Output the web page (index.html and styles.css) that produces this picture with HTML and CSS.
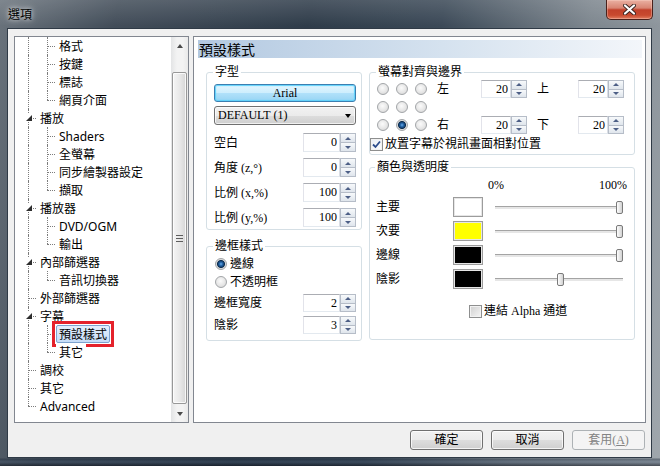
FILE: index.html
```html
<!DOCTYPE html>
<html lang="zh-Hant">
<head>
<meta charset="utf-8">
<title>選項</title>
<link rel="stylesheet" href="styles.css">
</head>
<body>
<div class="window">
  <div class="titlebar">
    <span class="title">選項</span>
    <div class="close">
      <svg width="13" height="11" viewBox="0 0 13 11"><path d="M2 1.5 L11 9.5 M11 1.5 L2 9.5" stroke="#3a2420" stroke-width="4" stroke-linecap="round"/><path d="M2 1.5 L11 9.5 M11 1.5 L2 9.5" stroke="#fff" stroke-width="2.2" stroke-linecap="round"/></svg>
    </div>
  </div>
  <div class="client">
    <div class="main">
      <div class="tree">
        <ul class="nodes">
          <li class="row"><span class="c v"></span><span class="c t"></span><span class="lbl">格式</span></li>
          <li class="row"><span class="c v"></span><span class="c t"></span><span class="lbl">按鍵</span></li>
          <li class="row"><span class="c v"></span><span class="c t"></span><span class="lbl">標誌</span></li>
          <li class="row"><span class="c v"></span><span class="c l"></span><span class="lbl">網頁介面</span></li>
          <li class="row"><span class="c x"><i class="tri"></i></span><span class="lbl">播放</span></li>
          <li class="row"><span class="c v"></span><span class="c t"></span><span class="lbl">Shaders</span></li>
          <li class="row"><span class="c v"></span><span class="c t"></span><span class="lbl">全螢幕</span></li>
          <li class="row"><span class="c v"></span><span class="c t"></span><span class="lbl">同步繪製器設定</span></li>
          <li class="row"><span class="c v"></span><span class="c l"></span><span class="lbl">擷取</span></li>
          <li class="row"><span class="c x"><i class="tri"></i></span><span class="lbl">播放器</span></li>
          <li class="row"><span class="c v"></span><span class="c t"></span><span class="lbl">DVD/OGM</span></li>
          <li class="row"><span class="c v"></span><span class="c l"></span><span class="lbl">輸出</span></li>
          <li class="row"><span class="c x"><i class="tri"></i></span><span class="lbl">內部篩選器</span></li>
          <li class="row"><span class="c v"></span><span class="c l"></span><span class="lbl">音訊切換器</span></li>
          <li class="row"><span class="c t"></span><span class="lbl">外部篩選器</span></li>
          <li class="row"><span class="c x"><i class="tri"></i></span><span class="lbl">字幕</span></li>
          <li class="row"><span class="c v"></span><span class="c t"></span><span class="lbl selected">預設樣式</span></li>
          <li class="row"><span class="c v"></span><span class="c l"></span><span class="lbl">其它</span></li>
          <li class="row"><span class="c t"></span><span class="lbl">調校</span></li>
          <li class="row"><span class="c t"></span><span class="lbl">其它</span></li>
          <li class="row"><span class="c l"></span><span class="lbl">Advanced</span></li>
        </ul>
        <div class="vscroll">
          <div class="sarrow"><i class="up"></i></div>
          <div class="strack"><div class="thumb"><i class="grip"></i></div></div>
          <div class="sarrow"><i class="down"></i></div>
        </div>
      </div>

      <div class="page">
        <div class="page-title">預設樣式</div>
        <div class="page-body">
          <div class="col col-left">
            <fieldset class="grp g-font">
              <legend>字型</legend>
              <div class="stack">
                <button class="hot">Arial</button>
                <div class="combo"><span>DEFAULT (1)</span><i class="carrow"></i></div>
                <div class="frow"><span>空白</span><div class="spin"><span class="edit">0</span><span class="sbs"><span class="sb up"></span><span class="sb dn"></span></span></div></div>
                <div class="frow"><span>角度 (z,°)</span><div class="spin"><span class="edit">0</span><span class="sbs"><span class="sb up"></span><span class="sb dn"></span></span></div></div>
                <div class="frow"><span>比例 (x,%)</span><div class="spin"><span class="edit">100</span><span class="sbs"><span class="sb up"></span><span class="sb dn"></span></span></div></div>
                <div class="frow"><span>比例 (y,%)</span><div class="spin"><span class="edit">100</span><span class="sbs"><span class="sb up"></span><span class="sb dn"></span></span></div></div>
              </div>
            </fieldset>
            <fieldset class="grp g-border">
              <legend>邊框樣式</legend>
              <div class="stack">
                <div class="rrow"><i class="radio on"></i><span>邊線</span></div>
                <div class="rrow"><i class="radio"></i><span>不透明框</span></div>
                <div class="frow frow-s first"><span>邊框寬度</span><div class="spin spin-s"><span class="edit">2</span><span class="sbs"><span class="sb up"></span><span class="sb dn"></span></span></div></div>
                <div class="frow frow-s"><span>陰影</span><div class="spin spin-s"><span class="edit">3</span><span class="sbs"><span class="sb up"></span><span class="sb dn"></span></span></div></div>
              </div>
            </fieldset>
          </div>

          <div class="col col-right">
            <fieldset class="grp g-align">
              <legend>螢幕對齊與邊界</legend>
              <div class="stack">
                <div class="arow">
                  <div class="rgrid">
                    <span class="rc"><i class="radio"></i></span><span class="rc"><i class="radio"></i></span><span class="rc"><i class="radio"></i></span>
                    <span class="rc"><i class="radio"></i></span><span class="rc"><i class="radio"></i></span><span class="rc"><i class="radio"></i></span>
                    <span class="rc"><i class="radio"></i></span><span class="rc"><i class="radio on"></i></span><span class="rc"><i class="radio"></i></span>
                  </div>
                  <div class="mgrid">
                    <span class="ml">左</span>
                    <div class="spin spin-n"><span class="edit">20</span><span class="sbs"><span class="sb up"></span><span class="sb dn"></span></span></div>
                    <span class="ml ml2">上</span>
                    <div class="spin spin-n"><span class="edit">20</span><span class="sbs"><span class="sb up"></span><span class="sb dn"></span></span></div>
                    <span class="ml r3">右</span>
                    <div class="spin spin-n r3"><span class="edit">20</span><span class="sbs"><span class="sb up"></span><span class="sb dn"></span></span></div>
                    <span class="ml ml2 r3">下</span>
                    <div class="spin spin-n r3"><span class="edit">20</span><span class="sbs"><span class="sb up"></span><span class="sb dn"></span></span></div>
                  </div>
                </div>
                <div class="crow-check"><i class="check on"><svg width="11" height="11" viewBox="0 0 11 11"><path d="M2 5.5 L4.5 8 L9 2.5" fill="none" stroke="#2b4c8c" stroke-width="1.8"/></svg></i><span>放置字幕於視訊畫面相對位置</span></div>
              </div>
            </fieldset>
            <fieldset class="grp g-color">
              <legend>顏色與透明度</legend>
              <div class="stack">
                <div class="crow head"><span></span><span></span><span class="pct"><span>0%</span><span>100%</span></span></div>
                <div class="crow"><span>主要</span><span class="sw sw-white"></span><div class="slider"><span class="track"></span><span class="sthumb" style="--v:1"></span></div></div>
                <div class="crow"><span>次要</span><span class="sw sw-yellow"></span><div class="slider"><span class="track"></span><span class="sthumb" style="--v:1"></span></div></div>
                <div class="crow"><span>邊線</span><span class="sw sw-black"></span><div class="slider"><span class="track"></span><span class="sthumb" style="--v:1"></span></div></div>
                <div class="crow"><span>陰影</span><span class="sw sw-black"></span><div class="slider"><span class="track"></span><span class="sthumb" style="--v:0.51"></span></div></div>
                <div class="alpha"><i class="check"></i><span>連結 Alpha 通道</span></div>
              </div>
            </fieldset>
          </div>
        </div>
      </div>
    </div>
    <div class="buttons">
      <button class="btn">確定</button>
      <button class="btn">取消</button>
      <button class="btn disabled">套用(<u>A</u>)</button>
    </div>
  </div>
</div>
</body>
</html>
```
FILE: styles.css
```css
* { box-sizing: border-box; }
html, body { margin: 0; padding: 0; }
body {
  width: 660px;
  height: 466px;
  overflow: hidden;
  font: 12px/14px "Liberation Serif", "Noto Sans CJK TC", serif;
  color: #000;
}

/* window frame */
.window {
  width: 660px;
  height: 466px;
  display: flex;
  flex-direction: column;
  background:
    linear-gradient(to bottom, rgba(255,255,255,0.14), rgba(255,255,255,0) 26px),
    linear-gradient(to bottom, rgba(0,0,0,0) 458px, rgba(25,38,55,0.45) 459px, rgba(60,80,105,0.35) 462px, rgba(10,15,25,0.6) 466px),
    linear-gradient(100deg, #6a737c 0%, #424d59 16%, #2f3c4a 42%, #3b4957 60%, #7d868e 80%, #a0a7ad 100%);
}
.titlebar {
  height: 28px;
  flex: none;
  display: flex;
  align-items: flex-start;
  padding: 0 7px 0 8px;
}
.title {
  margin-top: 7px;
  font: 12px/14px "Noto Sans CJK TC", sans-serif;
  color: #000;
  text-shadow: 0 0 4px rgba(255,255,255,0.75), 0 0 9px rgba(255,255,255,0.6);
}
.close {
  margin-left: auto;
  width: 47px;
  height: 20px;
  border: 1px solid #4a211b;
  border-top: none;
  border-radius: 0 0 5px 5px;
  background: linear-gradient(#eab0a2 0%, #d88472 42%, #c2412b 52%, #c84a2f 80%, #e27d60 100%);
  box-shadow: inset 0 0 0 1px rgba(255,220,210,0.35);
  display: flex;
  align-items: center;
  justify-content: center;
}

/* client area */
.client {
  margin-left: 7px;
  width: 645px;
  height: 430px;
  border: 1px solid #2f3a46;
  background: #f0f0f0;
  padding: 7px 5px 7px 6px;
  display: flex;
  flex-direction: column;
}
.main {
  display: flex;
  gap: 4px;
  height: 387px;
}

/* tree */
.tree {
  width: 175px;
  border: 1px solid #828790;
  background: #fff;
  display: flex;
}
.nodes {
  flex: 1;
  list-style: none;
  margin: 0;
  padding: 0;
  font: 12px/16px "Noto Sans", "Noto Sans CJK TC", sans-serif;
}
.row {
  display: flex;
  align-items: center;
  height: 18px;
}
.c {
  position: relative;
  flex: none;
  width: 19px;
  height: 18px;
}
.c::before, .c::after { content: ""; position: absolute; }
.c.v::before, .c.t::before, .c.x::before {
  left: 13px; top: 0; bottom: 0;
  border-left: 1px dotted #7c7c7c;
}
.c.l::before {
  left: 13px; top: 0; height: 9px;
  border-left: 1px dotted #7c7c7c;
}
.c.t::after, .c.l::after, .c.x::after {
  left: 13px; top: 9px; width: 10px;
  border-top: 1px dotted #7c7c7c;
}
.tri {
  position: absolute;
  z-index: 1;
  left: 9px;
  top: 4px;
  width: 9px;
  height: 9px;
  background: #fff;
}
.tri::before {
  content: "";
  position: absolute;
  left: 2px;
  top: 2px;
  border-left: 6px solid transparent;
  border-bottom: 6px solid #2e2e2e;
}
.lbl {
  position: relative;
  z-index: 1;
  margin-left: 3px;
  padding: 0 2px;
  height: 18px;
  line-height: 17px;
  border: 1px solid transparent;
  background: #fff;
  white-space: nowrap;
}
.lbl.selected {
  border-color: #7da2ce;
  border-radius: 2px;
  background: linear-gradient(#e4effc, #c5dcf7);
}
.lbl.selected::after {
  content: "";
  position: absolute;
  left: -5px;
  top: -5px;
  right: -5px;
  bottom: -5px;
  border: 3px solid #e4222b;
}

.vscroll {
  width: 17px;
  flex: none;
  display: flex;
  flex-direction: column;
  background: linear-gradient(to right, #e3e4e5, #f3f3f3 35%, #f3f3f3 70%, #e9e9e9);
}
.sarrow {
  height: 17px;
  flex: none;
  display: flex;
  align-items: center;
  justify-content: center;
}
.up { border-left: 3px solid transparent; border-right: 3px solid transparent; border-bottom: 4px solid #4a4a4a; }
.down { border-left: 3px solid transparent; border-right: 3px solid transparent; border-top: 4px solid #4a4a4a; }
.strack {
  flex: 1;
  padding: 18px 1px 1px;
  display: flex;
}
.thumb {
  flex: 1;
  border: 1px solid #989898;
  border-radius: 2px;
  background: linear-gradient(to right, #f5f5f5, #e9e9e9 50%, #d6d6d6);
  box-shadow: inset 0 0 0 1px rgba(255,255,255,0.8);
  display: flex;
  align-items: center;
  justify-content: center;
}
.grip {
  width: 7px;
  height: 7px;
  background: repeating-linear-gradient(#5e5e5e 0 1px, transparent 1px 3px);
}

/* page */
.page {
  width: 453px;
  border: 1px solid #828790;
  background: #fff;
  padding: 3px 3px 0 4px;
}
.page-title {
  height: 18px;
  padding-left: 1px;
  font: 14px/18px "Noto Sans CJK TC", sans-serif;
  background: linear-gradient(to right, #b3c9e1, #d5e2ef 55%, #f3f6fa);
}
.page-body {
  display: grid;
  grid-template-columns: 156px 266px;
  column-gap: 7px;
  align-items: start;
  margin: 7px 0 0 8px;
}
.col { display: flex; flex-direction: column; }
.col-left { gap: 9px; }
.col-right { gap: 5px; }

.grp {
  margin: 0;
  min-width: 0;
  border: 1px solid #d5dfe5;
  border-radius: 3px;
}
.grp legend {
  padding: 0 2px;
  font: 12px/14px "Liberation Serif", "Noto Sans CJK TC", serif;
}
.stack { display: flex; flex-direction: column; }

.g-font { height: 165px; padding: 5px 5px 0 7px; }
.g-font legend { margin-left: -1px; }
.g-border { height: 102px; padding: 2px 5px 0 7px; }
.g-border legend { margin-left: -1px; }
.g-align { height: 90px; padding: 1px 0 0 3px; }
.g-align legend { margin-left: 3px; }
.g-color { height: 180px; padding: 4px 0 0 6px; }
.g-color legend { margin-left: -1px; }

/* buttons */
.hot {
  height: 18px;
  padding: 0;
  border: 1px solid #3c7fb1;
  border-radius: 3px;
  background: linear-gradient(#e3f5fe 0%, #cdeefd 50%, #b1e1fa 51%, #98d5f4 100%);
  box-shadow: inset 0 0 1px 1px #5fd2fb;
  font: 12px/16px "Liberation Serif", serif;
  color: #000;
}
.combo {
  margin-top: 4px;
  height: 19px;
  border: 1px solid #707070;
  border-radius: 3px;
  background: linear-gradient(#f2f2f2 0%, #ebebeb 50%, #dddddd 51%, #cfcfcf 100%);
  box-shadow: inset 0 0 0 1px rgba(255,255,255,0.7);
  display: flex;
  align-items: center;
  justify-content: space-between;
  padding: 0 4px 0 3px;
  line-height: 17px;
}
.carrow {
  border-left: 3.5px solid transparent;
  border-right: 3.5px solid transparent;
  border-top: 4px solid #000;
}

.frow {
  display: flex;
  align-items: center;
  justify-content: space-between;
  height: 19px;
  margin-top: 6px;
}
.frow:nth-child(3) { margin-top: 8px; }
.frow-s { height: 18px; margin-top: 4px; }
.frow-s.first { margin-top: 3px; }

.spin {
  display: flex;
  height: 19px;
  width: 53px;
}
.spin-s { height: 18px; }
.spin-n { width: 46px; height: 18px; }
.edit {
  flex: 1;
  border: 1px solid;
  border-color: #abadb3 #dbdfe6 #e3e9ef #e2e3ea;
  background: #fff;
  text-align: right;
  padding-right: 2px;
  line-height: 16px;
}
.sbs {
  width: 16px;
  flex: none;
  display: flex;
  flex-direction: column;
}
.sb {
  flex: 1;
  display: flex;
  align-items: center;
  justify-content: center;
  border: 1px solid #b6bdc8;
  background: linear-gradient(#f7f9fb, #dfe5ec);
}
.sb.dn { border-top: none; }
.sb.up::before {
  content: "";
  border-left: 3px solid transparent;
  border-right: 3px solid transparent;
  border-bottom: 3px solid #4d5f86;
}
.sb.dn::before {
  content: "";
  border-left: 3px solid transparent;
  border-right: 3px solid transparent;
  border-top: 3px solid #4d5f86;
}

/* radios & checks */
.radio {
  display: inline-block;
  width: 12px;
  height: 12px;
  border-radius: 50%;
  border: 1px solid #a2a5a8;
  background: radial-gradient(circle at 45% 40%, #fbfbfb 0, #e6e6e6 55%, #d0d0d0 100%);
}
.radio.on {
  background: radial-gradient(circle at 50% 50%, #6fb0ea 0, #2a6cb0 1.5px, #133f6e 3px, #0e2d4e 3.6px, #dadada 4.4px, #eeeeee 100%);
}
.rrow {
  display: flex;
  align-items: center;
  height: 18px;
  gap: 3px;
  padding-left: 1px;
}
.check {
  display: inline-flex;
  align-items: center;
  justify-content: center;
  width: 13px;
  height: 13px;
  border: 1px solid #8e8f8f;
  background: linear-gradient(135deg, #cfcfcf, #f6f6f6);
  box-shadow: inset 0 0 0 1px #f2f2f2;
}
.check.on { background: linear-gradient(135deg, #e9eef5, #fdfdfd); }

/* align group */
.arow { display: flex; }
.rgrid {
  display: grid;
  grid-template-columns: repeat(3, 19px);
  grid-template-rows: repeat(3, 18px);
}
.rc { display: flex; align-items: center; justify-content: center; }
.mgrid {
  margin-left: 7px;
  display: grid;
  grid-template-columns: 44px 46px 51px 46px;
  grid-template-rows: 18px 18px 18px;
  align-items: center;
}
.ml2 { padding-left: 10px; }
.r3 { grid-row: 3; }
.crow-check {
  display: flex;
  align-items: center;
  gap: 2px;
  height: 18px;
  margin: 1px 0 0 -3px;
}

/* color group */
.crow {
  display: grid;
  grid-template-columns: 77px 30px 144px;
  align-items: center;
  height: 20px;
  margin-top: 4px;
}
.crow.head { height: 14px; margin-top: 0; }
.crow.head + .crow { margin-top: 5px; }
.pct {
  display: flex;
  justify-content: space-between;
  padding-left: 5px;
}
.sw {
  width: 30px;
  height: 20px;
  border: 1px solid #9c9c9c;
  box-shadow: inset 0 0 0 1px #e6e6e6;
}
.sw-white { background: #fff; }
.sw-yellow { background: #ffff00; }
.sw-black { background: #000; }
.slider {
  position: relative;
  height: 20px;
  display: flex;
  align-items: center;
  padding: 0 4px 0 12px;
}
.track {
  flex: 1;
  height: 3px;
  border-top: 1px solid #a4a4a4;
  background: #e6e6e6;
}
.sthumb {
  position: absolute;
  top: 4px;
  left: calc(12px + var(--v) * 121px);
  width: 7px;
  height: 13px;
  border: 1px solid #7a7a7a;
  border-radius: 2px;
  background: linear-gradient(to right, #fefefe, #d2d2d2);
}
.alpha {
  display: flex;
  align-items: center;
  gap: 2px;
  height: 18px;
  margin: 13px 0 0 93px;
}

/* dialog buttons */
.buttons {
  display: flex;
  justify-content: flex-end;
  gap: 8px;
  margin-top: 7px;
  padding-right: 1px;
}
.btn {
  width: 73px;
  height: 20px;
  padding: 0;
  border: 1px solid #707070;
  border-radius: 3px;
  background: linear-gradient(#f2f2f2 0%, #ebebeb 50%, #dddddd 51%, #cfcfcf 100%);
  box-shadow: inset 0 0 0 1px rgba(255,255,255,0.75);
  font: 12px/16px "Liberation Serif", "Noto Sans CJK TC", serif;
  color: #000;
}
.btn.disabled {
  border-color: #adb2b5;
  background: #f4f4f4;
  box-shadow: none;
  color: #838383;
}
```
